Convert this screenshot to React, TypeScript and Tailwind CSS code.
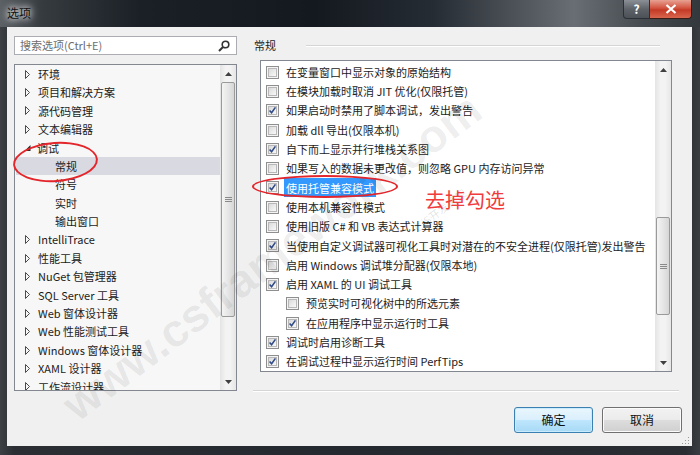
import React from "react";

type TreeItem = { text: string; kind: "collapsed" | "expanded" | "child"; selected?: boolean };

const treeItems: TreeItem[] = [
  { text: "环境", kind: "collapsed" },
  { text: "项目和解决方案", kind: "collapsed" },
  { text: "源代码管理", kind: "collapsed" },
  { text: "文本编辑器", kind: "collapsed" },
  { text: "调试", kind: "expanded" },
  { text: "常规", kind: "child", selected: true },
  { text: "符号", kind: "child" },
  { text: "实时", kind: "child" },
  { text: "输出窗口", kind: "child" },
  { text: "IntelliTrace", kind: "collapsed" },
  { text: "性能工具", kind: "collapsed" },
  { text: "NuGet 包管理器", kind: "collapsed" },
  { text: "SQL Server 工具", kind: "collapsed" },
  { text: "Web 窗体设计器", kind: "collapsed" },
  { text: "Web 性能测试工具", kind: "collapsed" },
  { text: "Windows 窗体设计器", kind: "collapsed" },
  { text: "XAML 设计器", kind: "collapsed" },
  { text: "工作流设计器", kind: "collapsed" },
];

type Option = { text: string; checked: boolean; indent?: boolean; selected?: boolean };

const options: Option[] = [
  { text: "在变量窗口中显示对象的原始结构", checked: false },
  { text: "在模块加载时取消 JIT 优化(仅限托管)", checked: false },
  { text: "如果启动时禁用了脚本调试，发出警告", checked: true },
  { text: "加载 dll 导出(仅限本机)", checked: false },
  { text: "自下而上显示并行堆栈关系图", checked: true },
  { text: "如果写入的数据未更改值，则忽略 GPU 内存访问异常", checked: false },
  { text: "使用托管兼容模式", checked: true, selected: true },
  { text: "使用本机兼容性模式", checked: false },
  { text: "使用旧版 C# 和 VB 表达式计算器", checked: false },
  { text: "当使用自定义调试器可视化工具时对潜在的不安全进程(仅限托管)发出警告", checked: true },
  { text: "启用 Windows 调试堆分配器(仅限本地)", checked: false },
  { text: "启用 XAML 的 UI 调试工具", checked: true },
  { text: "预览实时可视化树中的所选元素", checked: false, indent: true },
  { text: "在应用程序中显示运行时工具", checked: true, indent: true },
  { text: "调试时启用诊断工具", checked: true },
  { text: "在调试过程中显示运行时间 PerfTips", checked: true },
];

function CheckBox({ checked }: { checked: boolean }) {
  return (
    <svg width="13" height="13" className="shrink-0">
      <defs>
        <linearGradient id="cbg" x1="0" y1="0" x2="1" y2="1">
          <stop offset="0" stopColor="#d8d8d8" />
          <stop offset="1" stopColor="#fbfbfb" />
        </linearGradient>
      </defs>
      <rect x="0.5" y="0.5" width="12" height="12" fill="#f4f4f4" stroke="#8f8f8f" />
      <rect x="2.5" y="2.5" width="8" height="8" fill="url(#cbg)" stroke="#b8b8b8" />
      {checked && (
        <path d="M3.6 6.4 L5.6 8.8 L9.4 3.4" fill="none" stroke="#2f4a86" strokeWidth="1.6" />
      )}
    </svg>
  );
}

function ScrollBar({ thumbClass }: { thumbClass: string }) {
  return (
    <div className="w-[16px] h-full shrink-0 flex flex-col bg-[linear-gradient(to_right,#e4e4e4,#f3f3f3_35%,#f3f3f3_65%,#e6e6e6)]">
      <div className="h-[17px] shrink-0 flex items-center justify-center">
        <svg width="7" height="4">
          <path d="M0 4 L3.5 0 L7 4 Z" fill="#404040" />
        </svg>
      </div>
      <div className="flex-1 flex flex-col">
        <div
          className={`${thumbClass} mx-[1px] rounded-[2px] border border-[#9a9a9a] bg-[linear-gradient(to_right,#f4f4f4,#e6e6e6_50%,#d6d6d6)] flex items-center justify-center`}
        >
          <svg width="7" height="7">
            <path d="M0 1.5 H7 M0 3.5 H7 M0 5.5 H7" stroke="#8a8a8a" strokeWidth="1" />
          </svg>
        </div>
      </div>
      <div className="h-[17px] shrink-0 flex items-center justify-center">
        <svg width="7" height="4">
          <path d="M0 0 L3.5 4 L7 0 Z" fill="#404040" />
        </svg>
      </div>
    </div>
  );
}

function TreeArrow({ kind }: { kind: TreeItem["kind"] }) {
  if (kind === "collapsed")
    return (
      <svg width="6" height="9" className="shrink-0">
        <path d="M0.5 0.5 L4.5 4.5 L0.5 8.5 Z" fill="none" stroke="#4a4a4a" />
      </svg>
    );
  return (
    <svg width="7" height="9" className="shrink-0">
      <path d="M6.5 2 L6.5 8 L0.5 8 Z" fill="#2a2a2a" />
    </svg>
  );
}

export default function App() {
  return (
    <div className="relative w-[700px] h-[455px] overflow-hidden flex flex-col bg-[linear-gradient(to_right,#3d4146,#2b2f34_2%,#24292f_50%,#2a2e33_98%,#3a3e43)] font-['Noto_Sans_CJK_SC','Noto_Sans',sans-serif] text-[11px] text-[#1b1b1b]">
      {/* title bar */}
      <div className="h-[27px] shrink-0 flex items-start bg-[linear-gradient(to_right,#5c6166_0%,#363b40_6%,#1b2026_20%,#141920_45%,#262c33_62%,#686e73_82%,#454a4f_92%,#33383d_100%)]">
        <span className="ml-[7px] mt-[5px] text-[12px] leading-[16px] text-[#111] [text-shadow:0_0_6px_#fff,0_0_10px_#fff]">
          选项
        </span>
        <div className="ml-auto mr-[8px] flex h-[19px]">
          <div className="w-[27px] h-full rounded-bl-[4px] border border-t-0 border-[#2b3036] bg-[linear-gradient(to_bottom,#8a9095,#5d6368_50%,#4b5156)] flex items-center justify-center text-white text-[12px] font-bold leading-none">
            ?
          </div>
          <div className="w-[42px] h-full rounded-br-[4px] border border-l-0 border-t-0 border-[#3a1c17] bg-[linear-gradient(to_bottom,#e8a293,#d2533f_45%,#c43a26_55%,#d8654d)] flex items-center justify-center">
            <svg width="12" height="10">
              <path d="M1.5 1 L10.5 9 M10.5 1 L1.5 9" stroke="#fff" strokeWidth="2.2" />
            </svg>
          </div>
        </div>
      </div>

      {/* body */}
      <div className="flex-1 flex pl-[7px] pr-[8px] pb-[9px]">
        <div className="relative flex-1 bg-[#f0f0f0] flex pt-[9px] pl-[7px]">
          {/* left column */}
          <div className="w-[223px] flex flex-col">
            <div className="h-[19px] border border-[#abadb3] bg-white flex items-center pl-[5px] pr-[6px]">
              <span className="text-[#6d6d6d] leading-none">搜索选项(Ctrl+E)</span>
              <svg width="12" height="12" className="ml-auto">
                <circle cx="7.5" cy="4.5" r="3.3" fill="none" stroke="#333" strokeWidth="1.6" />
                <path d="M5 7 L1 11" stroke="#333" strokeWidth="2" />
              </svg>
            </div>
            <div className="mt-[9px] h-[327px] border border-[#828790] bg-[#f7f7f7] flex">
              <div className="flex-1 overflow-hidden pl-[1px]">
                {treeItems.map((item) => (
                  <div
                    key={item.text}
                    className={`h-[18.4px] flex items-center whitespace-nowrap ${
                      item.selected ? "bg-[#d9d9e1]" : ""
                    }`}
                  >
                    {item.kind === "child" ? (
                      <span className="ml-[39px]">{item.text}</span>
                    ) : (
                      <>
                        <span className={item.kind === "expanded" ? "ml-[8px]" : "ml-[9px]"}>
                          <TreeArrow kind={item.kind} />
                        </span>
                        <span className={item.kind === "expanded" ? "ml-[6px]" : "ml-[7px]"}>
                          {item.text}
                        </span>
                      </>
                    )}
                  </div>
                ))}
              </div>
              <ScrollBar thumbClass="mt-0 h-[235px]" />
            </div>
          </div>

          {/* right column */}
          <div className="ml-[16px] w-[426px] flex flex-col">
            <div className="h-[19px] flex items-center">
              <span className="pl-[1px] leading-none">常规</span>
              <div className="ml-[30px] mr-[19px] flex-1 h-[2px] border-t border-[#d5d5d5] border-b border-b-white" />
            </div>
            <div className="ml-[7px] mt-[5px] w-[412px] h-[312px] border border-[#828790] bg-white flex">
              <div className="flex-1 overflow-hidden pl-[5px] pt-[1.5px]">
                {options.map((o) => (
                  <div
                    key={o.text}
                    className={`h-[19.3px] flex items-center whitespace-nowrap ${o.indent ? "pl-[20px]" : ""}`}
                  >
                    <CheckBox checked={o.checked} />
                    {o.selected ? (
                      <span className="ml-[5px] px-[2px] h-[19px] flex items-center bg-[#3399ff] text-white">
                        {o.text}
                      </span>
                    ) : (
                      <span className="ml-[7px]">{o.text}</span>
                    )}
                  </div>
                ))}
              </div>
              <ScrollBar thumbClass="mt-[139px] h-[98px]" />
            </div>
            <div className="mt-[18px] h-[2px] border-t border-[#d5d5d5] border-b border-b-white" />
            <div className="mt-[15px] mr-[-3px] flex justify-end gap-[9px]">
              <button className="w-[79px] h-[26px] rounded-[3px] border border-[#3c7fb1] bg-[linear-gradient(to_bottom,#eaf6fd,#d9f0fc_50%,#bee6fd_51%,#a7d9f5)] shadow-[inset_0_0_0_1px_#c9ebfb] text-[12px] text-[#111]">
                确定
              </button>
              <button className="w-[80px] h-[26px] rounded-[3px] border border-[#707070] bg-[linear-gradient(to_bottom,#f2f2f2,#ebebeb_50%,#dddddd_51%,#cfcfcf)] shadow-[inset_0_0_0_1px_#fbfbfb] text-[12px] text-[#111]">
                取消
              </button>
            </div>
          </div>

          {/* resize grip */}
          <svg width="8" height="8" className="absolute right-[2px] bottom-[2px]">
            <path d="M6 1h1v1h-1zM6 4h1v1h-1zM3 4h1v1h-1zM6 7h1v1h-1zM3 7h1v1h-1zM0 7h1v1h-1z" fill="#9a9a9a" />
          </svg>
        </div>
      </div>

      {/* watermark */}
      <div className="pointer-events-none absolute left-[272px] top-[257px] -translate-x-1/2 -translate-y-1/2 -rotate-[37deg] whitespace-nowrap font-['Liberation_Sans',sans-serif] text-[46px] font-bold text-black/[0.07]">
        www.csframework.com
      </div>
      <div className="pointer-events-none absolute left-[440px] top-[210px] -translate-x-1/2 -translate-y-1/2 -rotate-[37deg] whitespace-nowrap text-[11px] text-black/[0.12]">
        C/S开发框架
      </div>

      {/* annotations */}
      <div className="pointer-events-none absolute left-[13px] top-[142px] w-[85px] h-[40px] rounded-[50%] border-2 border-[#e3262b] -rotate-[4deg]" />
      <div className="pointer-events-none absolute left-[252px] top-[175px] w-[146px] h-[23px] rounded-[50%] border-2 border-[#e3262b]" />
      <div className="pointer-events-none absolute left-[425px] top-[188px] text-[20px] leading-[24px] text-[#f03c3c]">
        去掉勾选
      </div>
    </div>
  );
}
